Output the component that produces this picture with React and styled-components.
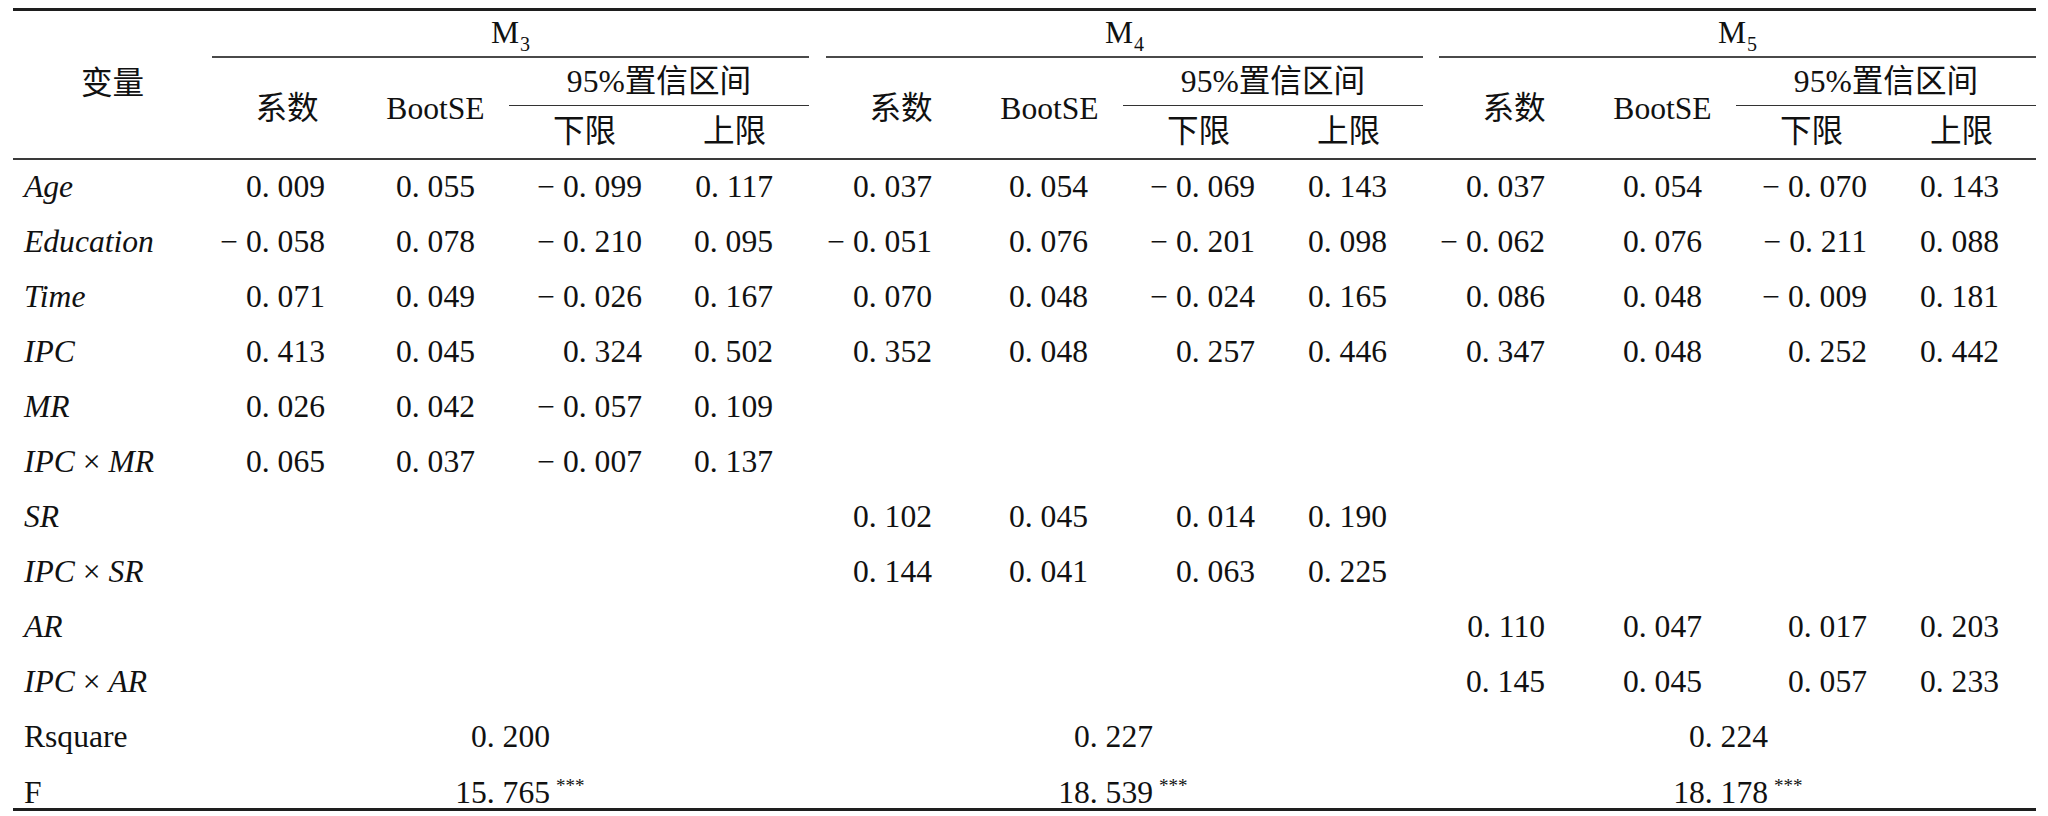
import React from 'react';
import styled, { createGlobalStyle } from 'styled-components';

const GlobalStyle = createGlobalStyle`
  html, body {
    margin: 0;
    padding: 0;
    background: #fff;
  }
  body {
    font-family: "Liberation Serif", "Noto Sans CJK SC", serif;
    color: #111;
  }
`;

const COLS = '150px 147px 151px 149px';

const Page = styled.div`
  padding: 8px 12px 0 13px;
`;

const Table = styled.div`
  width: 2023px;
  font-size: 31.6px;
  border-bottom: 3px solid #1e1e1e;
`;

const Head = styled.div`
  display: flex;
  height: 147px;
  line-height: 36px;
  border-top: 3px solid #1e1e1e;
  border-bottom: 2px solid #3a3a3a;
`;

const HeadLabel = styled.div`
  width: 199px;
  display: flex;
  align-items: center;
  justify-content: center;
  padding-bottom: 2px;
`;

const HeadGroup = styled.div`
  width: 597px;
  display: flex;
  flex-direction: column;
`;

const GroupTitle = styled.div`
  height: 47px;
  line-height: 40px;
  padding-top: 2px;
  box-sizing: border-box;
  text-align: center;
  border-bottom: 2px solid #4a4a4a;
`;

const Sub = styled.sub`
  font-size: 20px;
  vertical-align: -8px;
  line-height: 0;
  margin-left: 1px;
`;

const SubHead = styled.div`
  flex: 1;
  display: grid;
  grid-template-columns: ${COLS};
  grid-template-rows: 48px 1fr;
`;

const HeadCell = styled.div`
  display: flex;
  align-items: center;
  justify-content: center;
  grid-column: ${({ col }) => col};
  grid-row: ${({ row }) => row};
  border-bottom: ${({ ruled }) => (ruled ? '1.7px solid #333' : 'none')};
  padding-top: ${({ row }) => (row === '1' ? '0' : '1px')};
  padding-bottom: ${({ row }) => (row === '2' ? '1px' : '0')};
`;

const Spacer = styled.div`
  width: ${({ w }) => w}px;
  flex: none;
`;

const Row = styled.div`
  display: flex;
  height: ${({ last }) => (last ? '42px' : '55.05px')};
  line-height: 54.8px;
  white-space: nowrap;
`;

const Label = styled.div`
  width: 199px;
  padding-left: 11px;
  box-sizing: border-box;
  flex: none;
`;

const Var = styled.i`
  font-style: italic;
`;

const Group = styled.div`
  width: 597px;
  flex: none;
  display: grid;
  grid-template-columns: ${COLS};
`;

const Num = styled.div`
  text-align: right;
  padding-right: ${({ pad }) => pad}px;
`;

const Span = styled.div`
  width: 597px;
  flex: none;
  text-align: right;
  padding-right: ${({ pad }) => pad}px;
  box-sizing: border-box;
`;

const Value = styled.span`
  position: relative;
`;

const Stars = styled.span`
  position: absolute;
  left: calc(100% + 6px);
  top: 1px;
  font-size: 19px;
  line-height: 19px;
`;

const PADS = [
  [37, 34, 18, 36],
  [44, 35, 19, 36],
  [44, 34, 20, 37],
];
const GAPS = [17, 16];

const Ix = ({ a, b }) => (
  <>
    <Var>{a}</Var> × <Var>{b}</Var>
  </>
);

const rows = [
  {
    label: <Var>Age</Var>,
    m: [
      ['0. 009', '0. 055', '− 0. 099', '0. 117'],
      ['0. 037', '0. 054', '− 0. 069', '0. 143'],
      ['0. 037', '0. 054', '− 0. 070', '0. 143'],
    ],
  },
  {
    label: <Var>Education</Var>,
    m: [
      ['− 0. 058', '0. 078', '− 0. 210', '0. 095'],
      ['− 0. 051', '0. 076', '− 0. 201', '0. 098'],
      ['− 0. 062', '0. 076', '− 0. 211', '0. 088'],
    ],
  },
  {
    label: <Var>Time</Var>,
    m: [
      ['0. 071', '0. 049', '− 0. 026', '0. 167'],
      ['0. 070', '0. 048', '− 0. 024', '0. 165'],
      ['0. 086', '0. 048', '− 0. 009', '0. 181'],
    ],
  },
  {
    label: <Var>IPC</Var>,
    m: [
      ['0. 413', '0. 045', '0. 324', '0. 502'],
      ['0. 352', '0. 048', '0. 257', '0. 446'],
      ['0. 347', '0. 048', '0. 252', '0. 442'],
    ],
  },
  {
    label: <Var>MR</Var>,
    m: [['0. 026', '0. 042', '− 0. 057', '0. 109'], null, null],
  },
  {
    label: <Ix a="IPC" b="MR" />,
    m: [['0. 065', '0. 037', '− 0. 007', '0. 137'], null, null],
  },
  {
    label: <Var>SR</Var>,
    m: [null, ['0. 102', '0. 045', '0. 014', '0. 190'], null],
  },
  {
    label: <Ix a="IPC" b="SR" />,
    m: [null, ['0. 144', '0. 041', '0. 063', '0. 225'], null],
  },
  {
    label: <Var>AR</Var>,
    m: [null, null, ['0. 110', '0. 047', '0. 017', '0. 203']],
  },
  {
    label: <Ix a="IPC" b="AR" />,
    m: [null, null, ['0. 145', '0. 045', '0. 057', '0. 233']],
  },
];

const SPAN_PADS = [259, 270, 268];

const summary = [
  { label: 'Rsquare', vals: ['0. 200', '0. 227', '0. 224'] },
  { label: 'F', vals: ['15. 765', '18. 539', '18. 178'], stars: true },
];

const withGaps = (items) =>
  items.flatMap((item, i) =>
    i < GAPS.length ? [item, <Spacer key={`gap${i}`} w={GAPS[i]} />] : [item]
  );

const App = () => (
  <Page>
    <GlobalStyle />
    <Table>
      <Head>
        <HeadLabel>变量</HeadLabel>
        {withGaps(
          ['3', '4', '5'].map((n) => (
            <HeadGroup key={n}>
              <GroupTitle>
                M<Sub>{n}</Sub>
              </GroupTitle>
              <SubHead>
                <HeadCell col="1" row="1 / 3">系数</HeadCell>
                <HeadCell col="2" row="1 / 3">BootSE</HeadCell>
                <HeadCell col="3 / 5" row="1" ruled>95%置信区间</HeadCell>
                <HeadCell col="3" row="2">下限</HeadCell>
                <HeadCell col="4" row="2">上限</HeadCell>
              </SubHead>
            </HeadGroup>
          ))
        )}
      </Head>

      {rows.map((r, ri) => (
        <Row key={ri}>
          <Label>{r.label}</Label>
          {withGaps(
            r.m.map((vals, gi) => (
              <Group key={gi}>
                {vals &&
                  vals.map((v, ci) => (
                    <Num key={ci} pad={PADS[gi][ci]}>
                      {v}
                    </Num>
                  ))}
              </Group>
            ))
          )}
        </Row>
      ))}

      {summary.map((s, si) => (
        <Row key={s.label} last={si === summary.length - 1}>
          <Label>{s.label}</Label>
          {withGaps(
            s.vals.map((v, gi) => (
              <Span key={gi} pad={SPAN_PADS[gi]}>
                <Value>
                  {v}
                  {s.stars && <Stars>***</Stars>}
                </Value>
              </Span>
            ))
          )}
        </Row>
      ))}
    </Table>
  </Page>
);

export default App;
